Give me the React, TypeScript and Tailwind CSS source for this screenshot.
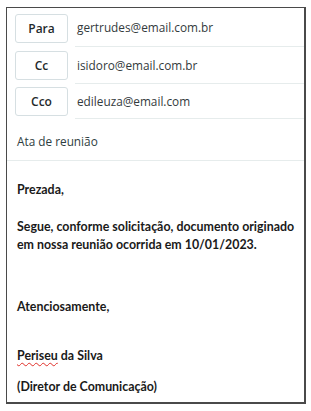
import React from "react";

const rows = [
  { label: "Para", email: "gertrudes@email.com.br", h: "h-[39px]", pt: "pt-[6px]" },
  { label: "Cc", email: "isidoro@email.com.br", h: "h-[37px]", pt: "pt-[4px]" },
  { label: "Cco", email: "edileuza@email.com", h: "h-[35px]", pt: "pt-[3px]" },
];

export default function App() {
  return (
    <div
      className="w-[311px] h-[411px] bg-white pt-[7px] pl-[6px] overflow-hidden"
      style={{ fontFamily: '"Open Sans", "Noto Sans", sans-serif' }}
    >
      <div className="w-[300px] h-[397px] border-l border-t border-r-2 border-b-2 border-[#4a4a4a] flex flex-col overflow-hidden">
        {rows.map((r) => (
          <div key={r.label} className={`flex shrink-0 ${r.h}`}>
            <div className={`w-[68px] pl-[8px] ${r.pt}`}>
              <div className="w-[53px] h-[29px] border border-[#d6dfe2] rounded-[3px] flex items-center justify-center text-[12px] font-semibold text-[#1f2a2c]">
                {r.label}
              </div>
            </div>
            <div className="flex-1 border-b border-[#e6ecec] flex items-center pl-[2px] pt-[1px] text-[11.8px] text-[#333a3c]">
              {r.email}
            </div>
          </div>
        ))}
        <div className="h-[42px] shrink-0 border-b border-[#e6ecec] flex items-center pl-[10px] pt-[5px] text-[11.8px] text-[#2e3d40]">
          Ata de reunião
        </div>
        <div
          className="pl-[10px] pt-[20px] text-[12.4px] font-bold text-[#1a1a1a] leading-[18px] shrink-0"
          style={{ fontFamily: 'Lato, "Noto Sans", sans-serif' }}
        >
          <div>Prezada,</div>
          <div className="mt-[19px] whitespace-nowrap">Segue, conforme solicitação, documento originado</div>
          <div className="whitespace-nowrap">em nossa reunião ocorrida em 10/01/2023.</div>
          <div className="mt-[44px]">Atenciosamente,</div>
          <div className="mt-[31px]">
            <span className="underline decoration-wavy decoration-[#e0302a] decoration-1 underline-offset-2">Periseu</span> da Silva
          </div>
          <div className="mt-[13px]">(Diretor de Comunicação)</div>
        </div>
      </div>
    </div>
  );
}
